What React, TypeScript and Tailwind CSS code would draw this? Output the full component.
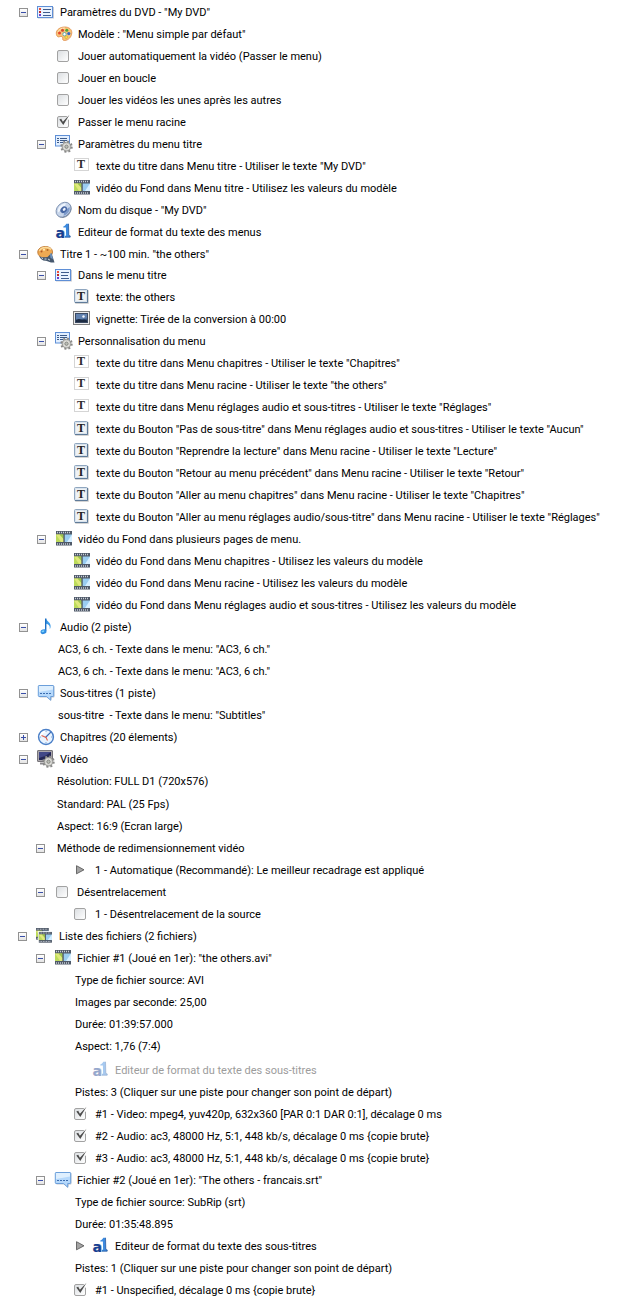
import { useState, type ReactNode } from 'react'
import clsx from 'clsx'

function Svg({ children, className }: { children: ReactNode; className?: string }) {
  return (
    <svg viewBox="0 0 18 18" className={clsx('w-[18px] h-[18px] block', className)} aria-hidden="true">
      {children}
    </svg>
  )
}

function Gear() {
  return (
    <g>
      <circle cx="11.5" cy="11.7" r="5" fill="none" stroke="#888" strokeWidth="2.4" strokeDasharray="1.9 2.03" />
      <circle cx="11.5" cy="11.7" r="4.4" fill="#c9c9c5" stroke="#8f8f8b" strokeWidth="0.9" />
      <circle cx="11.5" cy="11.7" r="2.9" fill="#e6e6e2" />
      <circle cx="11.5" cy="11.7" r="1.7" fill="#b9bdb5" stroke="#80807c" strokeWidth="0.9" />
    </g>
  )
}

function ListIcon() {
  return (
    <Svg>
      <rect x="1" y="4" width="16" height="11.5" fill="#c9ccd4" />
      <rect x="0.5" y="3.5" width="15" height="11" fill="#eaf3ff" stroke="#5f8fd6" />
      <rect x="2" y="5" width="2" height="2" fill="#f0503a" />
      <rect x="2" y="8" width="2" height="2" fill="#c02828" />
      <rect x="2" y="11" width="2" height="2" fill="#6a3fd0" />
      <path d="M6 6.5h8M6 9.5h7M6 12.5h8" stroke="#3f5c8c" />
    </Svg>
  )
}

function ListGearIcon() {
  return (
    <Svg>
      <rect x="0.5" y="0.5" width="14" height="10.5" fill="#e2efff" stroke="#5f8fd6" />
      <path d="M2 3.5h2M2 5.5h2M2 7.5h2M5 3.5h7M5 5.5h7M5 7.5h3" stroke="#3c5a88" />
      <Gear />
    </Svg>
  )
}

function VideoGearIcon() {
  return (
    <Svg>
      <rect x="0.5" y="0.5" width="15" height="11" rx="0.5" fill="#a9a6ab" stroke="#77757a" />
      <rect x="2" y="2" width="12" height="8" fill="#252855" />
      <path d="M2 2h12L8 6 2 8z" fill="#414887" />
      <path d="M3 13.5h5" stroke="#8a888c" strokeWidth="2" />
      <Gear />
    </Svg>
  )
}

function PaletteIcon() {
  return (
    <Svg>
      <path
        d="M1.3 8.2C1.3 4.8 5 2 9.8 2c4.2 0 7 2.3 7 5.6 0 4.4-3.6 7.9-7.3 7.9-1.6 0-2-.9-1.8-2 .2-1.2-.3-2.1-1.8-2.1-1 0-1.5.6-2.5.5-1.3-.2-2.1-1.7-2.1-3.7z"
        fill="#f9c478"
        stroke="#dd8a48"
        strokeWidth="0.8"
      />
      <path d="M3 7c.8-2.4 3.6-4 6.800-4" fill="none" stroke="#fff0c8" strokeWidth="0.9" />
      <circle cx="4.5" cy="8" r="1.5" fill="#e5462d" />
      <circle cx="7.5" cy="5.3" r="1.5" fill="#d94a2a" />
      <circle cx="11.8" cy="5.3" r="1.5" fill="#4fa53c" />
      <circle cx="13.8" cy="8.6" r="1.6" fill="#3465c4" />
      <circle cx="9.5" cy="9.2" r="1.7" fill="#fff" stroke="#4a9aa0" strokeWidth="0.8" />
      <circle cx="11.3" cy="12.2" r="1.4" fill="#f4e04c" stroke="#c89426" strokeWidth="0.4" />
    </Svg>
  )
}

function TitleIcon() {
  return (
    <Svg>
      <path
        d="M.8 7c0-3 3.200-5.500 7.400-5.500 4.300 0 7.300 2.300 7.300 5.400 0 3.600-3.200 5.900-7.200 5.900C4 12.800.8 11 .8 7z"
        fill="#eda953"
        stroke="#bd7630"
        strokeWidth="0.9"
      />
      <path d="M2.400 6C3.300 3.700 5.800 2.500 8.600 2.500c2.400 0 4.400.7 5.500 2" fill="none" stroke="#fbdc9c" strokeWidth="1.3" />
      <circle cx="4.500" cy="6.600" r="1" fill="#b0582a" />
      <circle cx="7" cy="4.800" r="1" fill="#fff0c0" />
      <circle cx="10.500" cy="5" r="1" fill="#b0682a" />
      <path d="M2 11c3 2 6 1.300 8.500 1L14.500 8l3 9.500H14l-5-1.700c-3 .3-5.500-1.300-7-4.800z" fill="#46586e" />
      <path d="M4.500 12.700l1.500 1M7.500 14h2M11 14l2 1.200" stroke="#cdd9e6" strokeWidth="1" />
      <path d="M13 9l1.300-1 1.700 6-2.500-1z" fill="#6f95c0" />
    </Svg>
  )
}

function TextIcon() {
  return (
    <Svg>
      <rect x="1.5" y="1.5" width="14" height="12" fill="#fff" stroke="#aaa" strokeDasharray="1 1" />
      <text x="8" y="11" textAnchor="middle" fontFamily="Liberation Serif, serif" fontWeight="bold" fontSize="12" fill="#2c2c2c">T</text>
    </Svg>
  )
}

function ButtonTextIcon() {
  return (
    <Svg>
      <rect x="2" y="2" width="14" height="14" rx="1" fill="#d4d4d4" />
      <rect x="1.5" y="1.5" width="13" height="13" rx="1" fill="#d9e3ed" stroke="#8fa6bf" />
      <path d="M14.500 2v12.500H2" fill="none" stroke="#5f7b99" />
      <rect x="3" y="3" width="10" height="10" fill="#eff2f4" />
      <text x="8" y="12" textAnchor="middle" fontFamily="Liberation Serif, serif" fontWeight="bold" fontSize="12" fill="#222">T</text>
    </Svg>
  )
}

function PictureIcon() {
  return (
    <Svg>
      <rect x="0.5" y="1.5" width="16" height="13" fill="#ececec" stroke="#7d7d7d" />
      <rect x="2.5" y="3.5" width="12" height="9" fill="#35547f" stroke="#3b4a63" />
      <path d="M3 4h11v4.500L3 9.500z" fill="#6182b0" />
      <path d="M3 12V10l3-1 3 1 2.500-.500 2.500 1V12z" fill="#1d2b42" />
      <circle cx="10.500" cy="6.500" r="1.200" fill="#f2f7ff" />
    </Svg>
  )
}

function FilmShape() {
  return (
    <g>
      <rect x="1" y="1" width="16" height="14.500" fill="#505a69" />
      <path d="M2 2.500h14M2 14h14" stroke="#c8ced6" strokeWidth="1.400" strokeDasharray="1 1" />
      <rect x="1" y="4.500" width="7.500" height="7.500" fill="#bcdb5c" />
      <path d="M1 4.500h4L8.500 9v3H6z" fill="#dfe97c" />
      <path d="M4.500 4.500h4V9z" fill="#9cc44e" />
      <rect x="9.500" y="4.500" width="7.500" height="7.500" fill="#9acdf0" />
      <path d="M17 4.500V12h-5z" fill="#d6efff" />
      <path d="M9 4v9" stroke="#505a69" />
    </g>
  )
}

function FilmIcon() {
  return (
    <Svg>
      <FilmShape />
    </Svg>
  )
}

function FilmsIcon() {
  return (
    <Svg>
      <g transform="translate(-0.8 0.2) scale(0.8)">
        <FilmShape />
      </g>
      <g transform="translate(2 4.2) scale(0.82 0.74)">
        <rect x="0" y="0" width="17" height="16" fill="#fff" />
        <FilmShape />
      </g>
    </Svg>
  )
}

function DiscIcon() {
  return (
    <Svg>
      <ellipse cx="9.2" cy="9.5" rx="8.3" ry="6.5" transform="rotate(-45 9.2 9.5)" fill="#8b95a5" />
      <ellipse cx="8.5" cy="8.7" rx="8.3" ry="6.5" transform="rotate(-45 8.5 8.7)" fill="#c7d5ea" stroke="#7186a8" strokeWidth="0.8" />
      <path d="M3 11.500C1.800 7 6 2.500 11 2.200L9 7z" fill="#eef4fc" />
      <path d="M14.500 6c1 3-1.500 7.500-6 8.800L9.500 10z" fill="#7e9bcb" />
      <ellipse cx="8.700" cy="8.700" rx="3.700" ry="2.900" transform="rotate(-45 8.7 8.7)" fill="#4868a4" />
      <ellipse cx="9.200" cy="8.400" rx="1.700" ry="1.200" transform="rotate(-45 9.2 8.4)" fill="#eef4ff" />
    </Svg>
  )
}

function FormatIcon({ faded }: { faded?: boolean }) {
  return (
    <Svg className={faded ? 'opacity-45' : undefined}>
      <text x="1.300" y="15.300" fontFamily="DejaVu Sans, sans-serif" fontWeight="bold" fontSize="14" fill="#a9b4c6">a</text>
      <text x="0.500" y="14.500" fontFamily="DejaVu Sans, sans-serif" fontWeight="bold" fontSize="14" fill="#173f92">a</text>
      <path d="M8.300 3.500C10 3 10.800 2 11.300.8h2.200l.3 11.600 1.400.5v1.300H9.900v-1.200l1.200-.5-.2-7.900H8.300z" fill="#3c8ade" />
      <path d="M13.500.8l.3 11.600 1.400.5v1.300H10" fill="none" stroke="#194c96" strokeWidth="0.700" />
    </Svg>
  )
}

function NoteIcon() {
  return (
    <Svg>
      <path d="M9 .5c.7 3.200 5.300 3.800 4.600 8.500-.1.900-.5 1.500-.9 2 .6-3.400-1.200-4.700-3.700-5.300z" fill="#3c9be8" />
      <path d="M8.700.5v12.500" stroke="#1d6fc4" strokeWidth="1.400" />
      <ellipse cx="6.500" cy="13.700" rx="3" ry="2.300" transform="rotate(-20 6.5 13.7)" fill="#2f8be0" />
      <ellipse cx="6" cy="13.300" rx="1.500" ry="0.900" transform="rotate(-20 6 13.3)" fill="#7cd4fb" />
    </Svg>
  )
}

function BubbleIcon() {
  return (
    <Svg>
      <path d="M2.500 2h14c.6 0 1 .4 1 1v9.500c0 .6-.4 1-1 1H15L14 17l-4-3.500H2.500" fill="#c5cad2" />
      <path d="M2 1.500h14c.4 0 .7.300.7.700v9.600c0 .4-.3.700-.7.700h-2.300v3.700L9.500 12.500H2c-.4 0-.7-.3-.7-.7V2.200c0-.4.300-.7.700-.7z" fill="#b5d8fb" stroke="#6c9fda" />
      <path d="M2 2h14v3.500L2 8z" fill="#deeffe" />
      <path d="M3 9.500h12" stroke="#3b6cae" strokeDasharray="2 1" />
    </Svg>
  )
}

function ClockIcon() {
  return (
    <Svg>
      <circle cx="9" cy="9" r="7.400" fill="#e9f4ff" stroke="#4c80c8" strokeWidth="1.500" />
      <path d="M3.500 9A5.500 5.500 0 0 1 9 3.500" fill="none" stroke="#fff" strokeWidth="2" />
      <path d="M9 2.700v1.400M9 14v1.400M2.700 9h1.400M14 9h1.400" stroke="#7fa6d8" />
      <path d="M13.800 4.200L8.500 9.500" stroke="#3a68b4" strokeWidth="1.200" />
      <path d="M4.500 7.500l4.500 2 1.500 3" fill="none" stroke="#e0604a" strokeWidth="1.100" />
    </Svg>
  )
}

function PlayIcon() {
  return (
    <Svg>
      <path d="M4.500 4.700L12 8.800l-7.500 4z" fill="#a4a4a4" stroke="#5c5c5c" strokeWidth="0.9" />
    </Svg>
  )
}

function CheckBox({ defaultChecked }: { defaultChecked?: boolean }) {
  return (
    <span className="relative block w-3 h-3 ml-0.5">
      <input
        type="checkbox"
        defaultChecked={defaultChecked}
        className="peer block appearance-none w-3 h-3 rounded-xs border border-[#a2a2a2] bg-linear-to-br from-[#dcdfe2] to-white"
      />
      <svg viewBox="0 0 14 14" className="hidden peer-checked:block absolute -top-0.5 left-0 w-3.5 h-3.5 pointer-events-none" aria-hidden="true">
        <path d="M9.500 1.500h3V5l-1.500 1z" fill="#fff" />
        <path d="M2.300 5.500l1.900-.8 1.700 3L12.500.8 6.300 11z" fill="#4c4c4c" />
      </svg>
    </span>
  )
}

type NodeProps = {
  label: string
  icon?: ReactNode
  lead?: ReactNode
  check?: boolean
  checked?: boolean
  expandable?: boolean
  open?: boolean
  disabled?: boolean
  className?: string
  listClass?: string
  children?: ReactNode
}

function Node({ label, icon, lead, check, checked, expandable, open = true, disabled, className, listClass, children }: NodeProps) {
  const [expanded, setExpanded] = useState(open)
  const Tag = check ? 'label' : 'span'
  return (
    <li className={className}>
      <div className="flex items-center h-[22px]">
        <span className="w-[18px] shrink-0">
          {(children || expandable) && (
            <button
              type="button"
              aria-expanded={expanded}
              aria-label={label}
              onClick={() => setExpanded(!expanded)}
              className="block w-[9px] h-[9px] border border-[#929292] bg-linear-to-b from-white to-[#e4e4e4]"
            >
              <svg viewBox="0 0 7 7" className="block w-[7px] h-[7px]" aria-hidden="true">
                <path d={expanded ? 'M1 3.5h5' : 'M1 3.5h5M3.5 1v5'} stroke="#3a4fa8" />
              </svg>
            </button>
          )}
        </span>
        <Tag className={clsx('flex items-center whitespace-pre', disabled && 'text-[#9c9c9c]')}>
          {lead !== undefined && <span className="w-5 shrink-0">{lead}</span>}
          {icon || check ? (
            <span className="w-[23px] shrink-0">{check ? <CheckBox defaultChecked={checked} /> : icon}</span>
          ) : (
            <span className="w-[3px] shrink-0" />
          )}
          <span className="pt-0.5">{label}</span>
        </Tag>
      </div>
      {children && expanded && <ul className={listClass ?? 'pl-[18px]'}>{children}</ul>}
    </li>
  )
}

export default function App() {
  return (
    <main className="min-h-screen bg-white text-black font-['Roboto',sans-serif] text-[11px] leading-[14px]">
      <ul className="pl-[19px] pt-px pb-1.5">
        <Node icon={<ListIcon />} label={'Paramètres du DVD - "My DVD"'}>
          <Node icon={<PaletteIcon />} label={'Modèle : "Menu simple par défaut"'} />
          <Node check label="Jouer automatiquement la vidéo (Passer le menu)" />
          <Node check label="Jouer en boucle" />
          <Node check label="Jouer les vidéos les unes après les autres" />
          <Node check checked label="Passer le menu racine" />
          <Node icon={<ListGearIcon />} label="Paramètres du menu titre">
            <Node icon={<TextIcon />} label={'texte du titre dans Menu titre - Utiliser le texte "My DVD"'} />
            <Node icon={<FilmIcon />} label="vidéo du Fond dans Menu titre - Utilisez les valeurs du modèle" />
          </Node>
          <Node icon={<DiscIcon />} label={'Nom du disque - "My DVD"'} />
          <Node icon={<FormatIcon />} label="Editeur de format du texte des menus" />
        </Node>
        <Node icon={<TitleIcon />} label={'Titre 1 - ~100 min. "the others"'} listClass="pl-[18px] -mt-px">
          <Node icon={<ListIcon />} label="Dans le menu titre">
            <Node icon={<ButtonTextIcon />} label="texte: the others" />
            <Node icon={<PictureIcon />} label="vignette: Tirée de la conversion à 00:00" />
          </Node>
          <Node icon={<ListGearIcon />} label="Personnalisation du menu">
            <Node icon={<TextIcon />} label={'texte du titre dans Menu chapitres - Utiliser le texte "Chapitres"'} />
            <Node icon={<TextIcon />} label={'texte du titre dans Menu racine - Utiliser le texte "the others"'} />
            <Node icon={<TextIcon />} label={'texte du titre dans Menu réglages audio et sous-titres - Utiliser le texte "Réglages"'} />
            <Node icon={<ButtonTextIcon />} label={'texte du Bouton "Pas de sous-titre" dans Menu réglages audio et sous-titres - Utiliser le texte "Aucun"'} />
            <Node icon={<ButtonTextIcon />} label={'texte du Bouton "Reprendre la lecture" dans Menu racine - Utiliser le texte "Lecture"'} />
            <Node icon={<ButtonTextIcon />} label={'texte du Bouton "Retour au menu précédent" dans Menu racine - Utiliser le texte "Retour"'} />
            <Node icon={<ButtonTextIcon />} label={'texte du Bouton "Aller au menu chapitres" dans Menu racine - Utiliser le texte "Chapitres"'} />
            <Node icon={<ButtonTextIcon />} label={'texte du Bouton "Aller au menu réglages audio/sous-titre" dans Menu racine - Utiliser le texte "Réglages"'} />
          </Node>
          <Node icon={<FilmIcon />} label="vidéo du Fond dans plusieurs pages de menu.">
            <Node icon={<FilmIcon />} label="vidéo du Fond dans Menu chapitres - Utilisez les valeurs du modèle" />
            <Node icon={<FilmIcon />} label="vidéo du Fond dans Menu racine - Utilisez les valeurs du modèle" />
            <Node icon={<FilmIcon />} label="vidéo du Fond dans Menu réglages audio et sous-titres - Utilisez les valeurs du modèle" />
          </Node>
        </Node>
        <Node icon={<NoteIcon />} label="Audio (2 piste)">
          <Node label={'AC3, 6 ch. - Texte dans le menu: "AC3, 6 ch."'} />
          <Node label={'AC3, 6 ch. - Texte dans le menu: "AC3, 6 ch."'} />
        </Node>
        <Node icon={<BubbleIcon />} label="Sous-titres (1 piste)">
          <Node label={'sous-titre  - Texte dans le menu: "Subtitles"'} />
        </Node>
        <Node icon={<ClockIcon />} label="Chapitres (20 élements)" expandable open={false} />
        <Node icon={<VideoGearIcon />} label="Vidéo" listClass="pl-[17px]">
          <Node label="Résolution: FULL D1 (720x576)" />
          <Node label="Standard: PAL (25 Fps)" className="mt-px" />
          <Node label="Aspect: 16:9 (Ecran large)" />
          <Node label="Méthode de redimensionnement vidéo">
            <Node icon={<PlayIcon />} label="1 - Automatique (Recommandé): Le meilleur recadrage est appliqué" />
          </Node>
          <Node check label="Désentrelacement">
            <Node check label="1 - Désentrelacement de la source" />
          </Node>
        </Node>
        <Node icon={<FilmsIcon />} label="Liste des fichiers (2 fichiers)" className="-ml-px">
          <Node icon={<FilmIcon />} label={'Fichier #1 (Joué en 1er): "the others.avi"'}>
            <Node label="Type de fichier source: AVI" />
            <Node label="Images par seconde: 25,00" />
            <Node label="Durée: 01:39:57.000" />
            <Node label="Aspect: 1,76 (7:4)" />
            <Node lead={null} icon={<FormatIcon faded />} label="Editeur de format du texte des sous-titres" disabled className="mt-0.5" />
            <Node label="Pistes: 3 (Cliquer sur une piste pour changer son point de départ)" />
            <Node check checked label="#1 - Video: mpeg4, yuv420p, 632x360 [PAR 0:1 DAR 0:1], décalage 0 ms" />
            <Node check checked label="#2 - Audio: ac3, 48000 Hz, 5:1, 448 kb/s, décalage 0 ms {copie brute}" />
            <Node check checked label="#3 - Audio: ac3, 48000 Hz, 5:1, 448 kb/s, décalage 0 ms {copie brute}" />
          </Node>
          <Node icon={<BubbleIcon />} label={'Fichier #2 (Joué en 1er): "The others - francais.srt"'}>
            <Node label="Type de fichier source: SubRip (srt)" />
            <Node label="Durée: 01:35:48.895" />
            <Node lead={<PlayIcon />} icon={<FormatIcon />} label="Editeur de format du texte des sous-titres" />
            <Node label="Pistes: 1 (Cliquer sur une piste pour changer son point de départ)" />
            <Node check checked label="#1 - Unspecified, décalage 0 ms {copie brute}" />
          </Node>
        </Node>
      </ul>
    </main>
  )
}
